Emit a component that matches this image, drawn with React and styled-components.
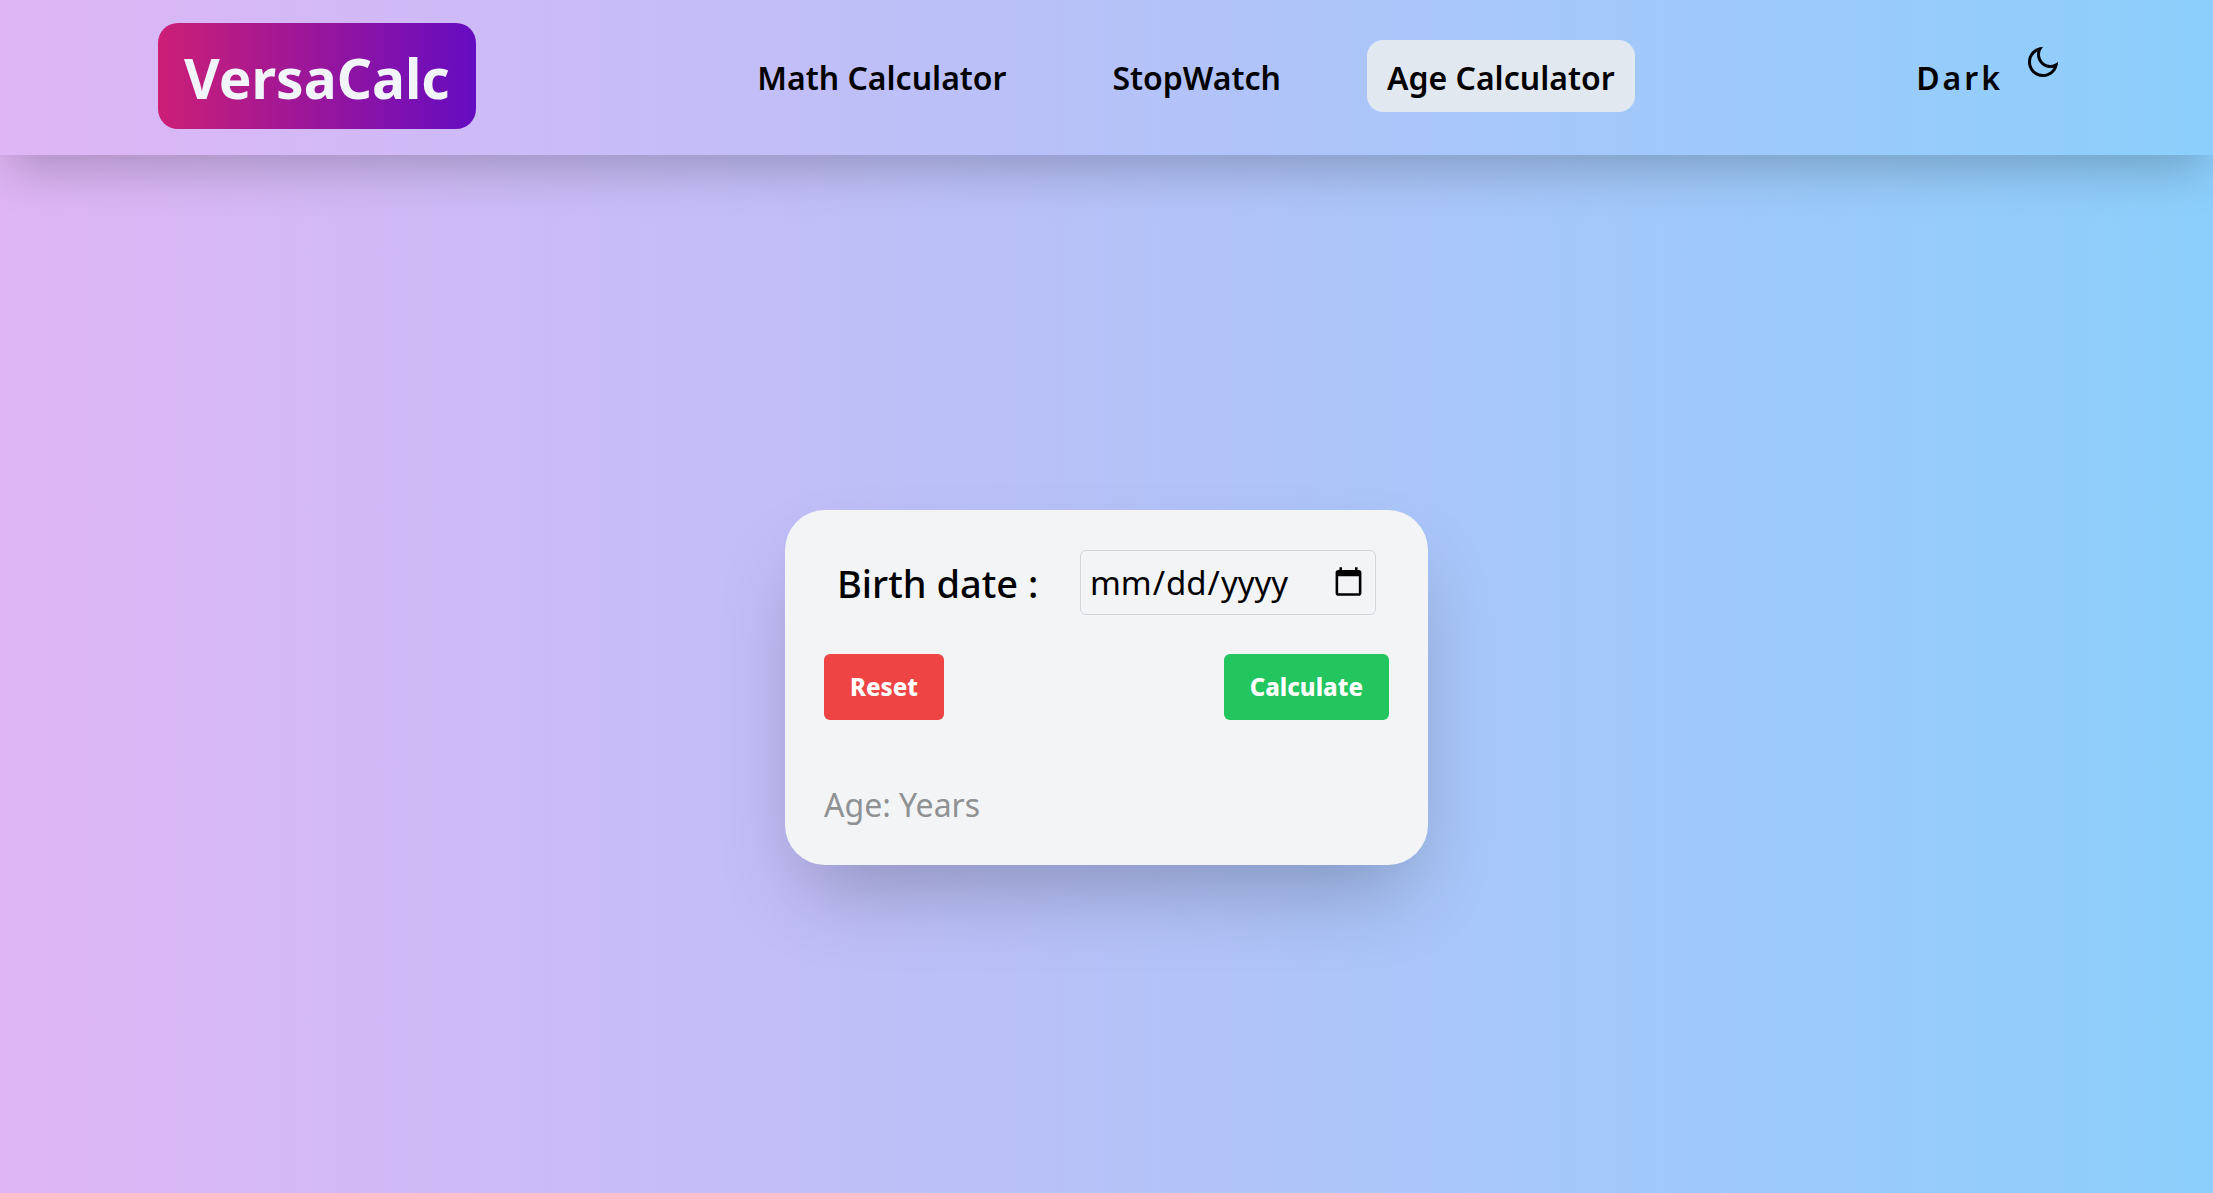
import React, { useState } from "react";
import styled, { createGlobalStyle } from "styled-components";
import { RiMoonLine } from "react-icons/ri";

const GlobalStyle = createGlobalStyle`
  *, *::before, *::after { box-sizing: border-box; }
  body {
    margin: 0;
    font-family: "Segoe UI", "Noto Sans", "Open Sans", sans-serif;
    color: #000;
  }
`;

const Page = styled.div`
  min-height: 100vh;
  display: flex;
  flex-direction: column;
  background: linear-gradient(90deg, #dfb5f5, #8ccffc);
`;

const Header = styled.header`
  display: flex;
  justify-content: space-between;
  align-items: flex-start;
  padding: 23px 152px 26px 158px;
  box-shadow: 0 22px 48px -8px rgba(0, 0, 0, 0.22);
`;

const Logo = styled.a`
  padding: 10px 26px 6px;
  border-radius: 20px;
  background: linear-gradient(90deg, #cc1f76, #650cc1);
  color: #f1f5f9;
  font-size: 55px;
  line-height: 90px;
  font-weight: 700;
  text-decoration: none;
`;

const Nav = styled.nav`
  display: flex;
  gap: 66px;
  padding-top: 17px;
`;

const NavLink = styled.a`
  padding: 14px 20px 10px;
  border-radius: 16px;
  background: ${(p) => (p.$active ? "#e2e8f0" : "transparent")};
  color: inherit;
  font-size: 32px;
  line-height: 48px;
  font-weight: 600;
  text-decoration: none;
`;

const ThemeToggle = styled.button`
  display: flex;
  align-items: flex-start;
  gap: 22px;
  margin-top: 21px;
  padding: 0 0 0 20px;
  border: 0;
  background: none;
  color: inherit;
  font: inherit;
  font-size: 32px;
  line-height: 68px;
  font-weight: 600;
  letter-spacing: 3px;
  cursor: pointer;
`;

const Main = styled.main`
  flex: 1;
  display: flex;
  justify-content: center;
  align-items: center;
  padding-top: 27px;
`;

const Card = styled.form`
  width: 643px;
  max-width: 100%;
  padding: 40px 39px 38px;
  border-radius: 40px;
  background: #f3f4f6;
  box-shadow: 0 41px 82px -20px rgba(0, 0, 0, 0.25);
`;

const Field = styled.div`
  display: flex;
  justify-content: space-between;
  align-items: center;
  padding: 0 13px;
`;

const Label = styled.label`
  font-size: 38px;
  font-weight: 500;
`;

const DateInput = styled.input`
  width: 296px;
  height: 65px;
  padding: 0 8px;
  border: 1px solid #d1d5db;
  border-radius: 6px;
  background: transparent;
  color: inherit;
  font: inherit;
  font-size: 33px;
`;

const Actions = styled.div`
  display: flex;
  justify-content: space-between;
  margin-top: 39px;
`;

const Button = styled.button`
  padding: 14px 26px;
  border: 0;
  border-radius: 6px;
  background: ${(p) => (p.$tone === "danger" ? "#ef4444" : "#22c55e")};
  color: #fff;
  font: inherit;
  font-size: 24px;
  line-height: 38px;
  font-weight: 800;
  cursor: pointer;
`;

const Result = styled.output`
  display: block;
  margin-top: 62px;
  color: #8f9193;
  font-size: 32px;
  line-height: 45px;
`;

const pages = ["Math Calculator", "StopWatch", "Age Calculator"];

function yearsSince(value) {
  const birth = new Date(value);
  const now = new Date();
  const before =
    now.getMonth() < birth.getMonth() ||
    (now.getMonth() === birth.getMonth() && now.getDate() < birth.getDate());
  return now.getFullYear() - birth.getFullYear() - (before ? 1 : 0);
}

export default function App() {
  const [date, setDate] = useState("");
  const [age, setAge] = useState("");

  const submit = (e) => {
    e.preventDefault();
    if (date) setAge(`${yearsSince(date)} `);
  };
  const reset = () => {
    setDate("");
    setAge("");
  };

  return (
    <>
      <GlobalStyle />
      <Page>
        <Header>
          <Logo href="#">VersaCalc</Logo>
          <Nav>
            {pages.map((name) => (
              <NavLink key={name} href="#" $active={name === "Age Calculator"}>
                {name}
              </NavLink>
            ))}
          </Nav>
          <ThemeToggle type="button">
            Dark
            <RiMoonLine size={36} aria-hidden="true" />
          </ThemeToggle>
        </Header>
        <Main>
          <Card onSubmit={submit}>
            <Field>
              <Label htmlFor="birth">Birth date :</Label>
              <DateInput
                id="birth"
                type="date"
                value={date}
                onChange={(e) => setDate(e.target.value)}
              />
            </Field>
            <Actions>
              <Button type="button" $tone="danger" onClick={reset}>
                Reset
              </Button>
              <Button type="submit">Calculate</Button>
            </Actions>
            <Result htmlFor="birth">Age: {age}Years</Result>
          </Card>
        </Main>
      </Page>
    </>
  );
}
